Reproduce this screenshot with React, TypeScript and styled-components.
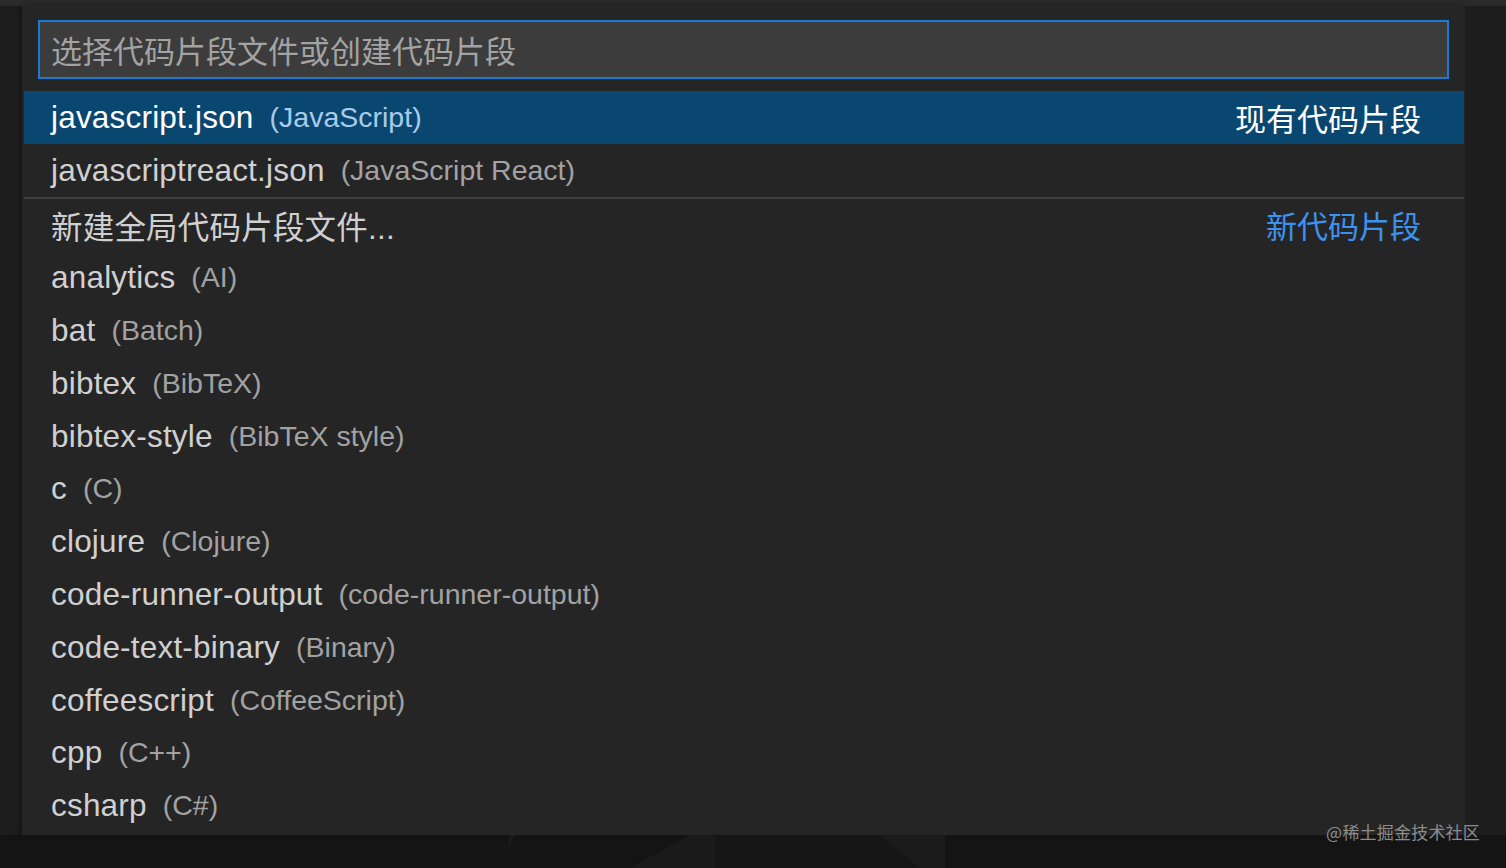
import styled, { createGlobalStyle } from "styled-components";

const GlobalStyle = createGlobalStyle`
  html, body {
    margin: 0;
    padding: 0;
    background: #1e1e1e;
  }
  * {
    box-sizing: border-box;
  }
`;

const FONT = `"Liberation Sans", "Noto Sans CJK SC", sans-serif`;

interface Item {
  label: string;
  description?: string;
  detail?: string;
  tone?: "existing" | "new";
}

const items: Item[] = [
  { label: "javascript.json", description: "(JavaScript)", detail: "现有代码片段", tone: "existing" },
  { label: "javascriptreact.json", description: "(JavaScript React)" },
  { label: "新建全局代码片段文件...", detail: "新代码片段", tone: "new" },
  { label: "analytics", description: "(AI)" },
  { label: "bat", description: "(Batch)" },
  { label: "bibtex", description: "(BibTeX)" },
  { label: "bibtex-style", description: "(BibTeX style)" },
  { label: "c", description: "(C)" },
  { label: "clojure", description: "(Clojure)" },
  { label: "code-runner-output", description: "(code-runner-output)" },
  { label: "code-text-binary", description: "(Binary)" },
  { label: "coffeescript", description: "(CoffeeScript)" },
  { label: "cpp", description: "(C++)" },
  { label: "csharp", description: "(C#)" },
];

const Screen = styled.div`
  position: relative;
  width: 1506px;
  height: 868px;
  overflow: hidden;
  display: flex;
  flex-direction: column;
  background: #1e1e1e;
  font-family: ${FONT};
`;

const TopStrip = styled.div`
  height: 6px;
  background: #2b2b2c;
  flex-shrink: 0;
`;

const Middle = styled.div`
  display: flex;
  height: 829px;
  flex-shrink: 0;
`;

const Gutter = styled.div<{ $w: number }>`
  width: ${({ $w }) => $w}px;
  flex-shrink: 0;
  background: #1d1d1e;
  border-right: ${({ $w }) => ($w === 22 ? "2px solid #1a1a1a" : "none")};
`;

const Panel = styled.div`
  flex: 1;
  background: #252526;
  display: flex;
  flex-direction: column;
  padding: 14px 0 0 0;
  box-shadow: 0 0 8px rgba(0, 0, 0, 0.4);
`;

const InputBox = styled.div`
  margin: 0 16px 12px 16px;
  height: 59px;
  background: #3c3c3c;
  border: 2px solid #1b7ad3;
  display: flex;
  align-items: center;
  padding-left: 11px;
  font-size: 31px;
  color: #a3a3a3;
`;

const List = styled.div`
  display: flex;
  flex-direction: column;
  margin: 0 1px 0 2px;
`;

const Row = styled.div<{ $selected?: boolean; $separated?: boolean }>`
  height: 52.8px;
  display: flex;
  align-items: center;
  padding: 0 43px 0 27px;
  background: ${({ $selected }) => ($selected ? "#094771" : "transparent")};
  border-top: ${({ $separated }) => ($separated ? "2px solid #404040" : "none")};
  box-sizing: content-box;
`;

const Label = styled.span<{ $selected?: boolean }>`
  font-size: 31.5px;
  letter-spacing: 0.2px;
  color: ${({ $selected }) => ($selected ? "#ffffff" : "#d0d0d0")};
  white-space: nowrap;
`;

const Description = styled.span<{ $selected?: boolean }>`
  font-size: 28.5px;
  margin-left: 16px;
  color: ${({ $selected }) => ($selected ? "#a9cbea" : "#a2a2a2")};
  white-space: nowrap;
`;

const Detail = styled.span<{ $tone?: "existing" | "new" }>`
  margin-left: auto;
  font-size: 31px;
  color: ${({ $tone }) => ($tone === "new" ? "#3c93ee" : "#ffffff")};
  white-space: nowrap;
`;

const Bottom = styled.div`
  flex: 1;
  background: #141414;
  position: relative;
  overflow: hidden;
`;

const Watermark = styled.div`
  position: absolute;
  right: 26px;
  bottom: 24px;
  font-size: 17px;
  color: #8c8c8c;
  font-family: "Noto Sans CJK SC", sans-serif;
  letter-spacing: 0.2px;
`;

const Logo = () => (
  <svg width="1506" height="33" viewBox="0 0 1506 33" style={{ display: "block" }}>
    <path d="M505 33 C505 20 510 8 515 0 L510 0 Z" fill="#1c1c1c" />
    <path d="M630 33 L690 0 L712 0 L760 33 Z" fill="#1a1a1a" />
    <rect x="715" y="0" width="230" height="33" fill="#161616" />
    <path d="M880 0 L945 0 L945 33 L920 33 Z" fill="#1b1b1b" />
  </svg>
);

export default function App() {
  return (
    <>
      <GlobalStyle />
      <Screen>
        <TopStrip />
        <Middle>
          <Gutter $w={22} />
          <Panel>
            <InputBox>选择代码片段文件或创建代码片段</InputBox>
            <List>
              {items.map((item, i) => (
                <Row key={item.label} $selected={i === 0} $separated={i === 2}>
                  <Label $selected={i === 0}>{item.label}</Label>
                  {item.description && (
                    <Description $selected={i === 0}>{item.description}</Description>
                  )}
                  {item.detail && <Detail $tone={item.tone}>{item.detail}</Detail>}
                </Row>
              ))}
            </List>
          </Panel>
          <Gutter $w={41} />
        </Middle>
        <Bottom>
          <Logo />
        </Bottom>
        <Watermark>@稀土掘金技术社区</Watermark>
      </Screen>
    </>
  );
}
